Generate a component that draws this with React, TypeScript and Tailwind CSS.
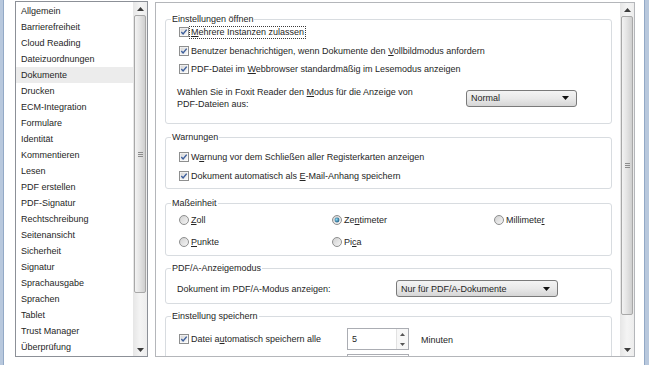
import React from "react";

const items = [
  "Allgemein",
  "Barrierefreiheit",
  "Cloud Reading",
  "Dateizuordnungen",
  "Dokumente",
  "Drucken",
  "ECM-Integration",
  "Formulare",
  "Identität",
  "Kommentieren",
  "Lesen",
  "PDF erstellen",
  "PDF-Signatur",
  "Rechtschreibung",
  "Seitenansicht",
  "Sicherheit",
  "Signatur",
  "Sprachausgabe",
  "Sprachen",
  "Tablet",
  "Trust Manager",
  "Überprüfung",
];

function Arrow({ up }: { up: boolean }) {
  return (
    <svg width="7" height="4" viewBox="0 0 7 4">
      <path d={up ? "M0 4 L3.5 0 L7 4 Z" : "M0 0 L3.5 4 L7 0 Z"} fill="#3c3c3c" />
    </svg>
  );
}

function Grip() {
  return (
    <div className="flex flex-col gap-[1px]">
      <div className="w-[5px] h-[1px] bg-[#8c8c8c]" />
      <div className="w-[5px] h-[1px] bg-[#8c8c8c]" />
      <div className="w-[5px] h-[1px] bg-[#8c8c8c]" />
    </div>
  );
}

function Scrollbar({ thumbClass }: { thumbClass: string }) {
  return (
    <div className="w-[14px] h-full shrink-0 flex flex-col bg-linear-to-r from-[#e6e6e6] via-[#f4f4f4] to-[#ededed]">
      <div className="h-[13px] shrink-0 flex items-center justify-center">
        <Arrow up />
      </div>
      <div
        className={
          thumbClass +
          " shrink-0 mx-[1px] rounded-[2px] border border-[#a8a8a8] bg-linear-to-r from-[#f3f3f3] via-[#e3e3e3] to-[#cfcfcf] flex items-center justify-center"
        }
      >
        <Grip />
      </div>
      <div className="flex-1" />
      <div className="h-[13px] shrink-0 flex items-center justify-center">
        <Arrow up={false} />
      </div>
    </div>
  );
}

function CheckIcon() {
  return (
    <svg width="10" height="10" viewBox="0 0 10 10" className="shrink-0">
      <defs>
        <linearGradient id="cbg" x1="0" y1="0" x2="1" y2="1">
          <stop offset="0" stopColor="#d6d6d6" />
          <stop offset="1" stopColor="#fafafa" />
        </linearGradient>
      </defs>
      <rect x="0.5" y="0.5" width="9" height="9" fill="#ffffff" stroke="#8e8f8f" />
      <rect x="1.5" y="1.5" width="7" height="7" fill="url(#cbg)" />
      <path d="M2.3 5.1 L4.1 7 L7.7 2.6" fill="none" stroke="#3d5f9c" strokeWidth="1.4" />
    </svg>
  );
}

function RadioIcon({ on }: { on?: boolean }) {
  return (
    <svg width="10" height="10" viewBox="0 0 10 10" className="shrink-0">
      <defs>
        <linearGradient id="rbg" x1="0" y1="0" x2="1" y2="1">
          <stop offset="0" stopColor="#cfcfcf" />
          <stop offset="1" stopColor="#f7f7f7" />
        </linearGradient>
        <radialGradient id="rdot" cx="0.4" cy="0.4" r="0.6">
          <stop offset="0" stopColor="#8fdcf5" />
          <stop offset="1" stopColor="#1d5d85" />
        </radialGradient>
      </defs>
      <circle cx="5" cy="5" r="4.5" fill="url(#rbg)" stroke="#8e8f8f" />
      {on && <circle cx="5" cy="5" r="2.4" fill="url(#rdot)" />}
    </svg>
  );
}

function U({ children }: { children: React.ReactNode }) {
  return <span className="underline decoration-1 underline-offset-[1px]">{children}</span>;
}

function Cb({ children, focus }: { children?: React.ReactNode; focus?: boolean }) {
  return (
    <div className="h-[14px] flex items-center whitespace-nowrap">
      <CheckIcon />
      {focus ? (
        <span className="border border-dotted border-[#3a3a3a] px-[1px] leading-[11px]">{children}</span>
      ) : (
        <span className="ml-[2px]">{children}</span>
      )}
    </div>
  );
}

function Radio({ children, on }: { children: React.ReactNode; on?: boolean }) {
  return (
    <div className="h-[14px] flex items-center whitespace-nowrap">
      <RadioIcon on={on} />
      <span className="ml-[2px]">{children}</span>
    </div>
  );
}

function Combo({ children, className }: { children: React.ReactNode; className: string }) {
  return (
    <div
      className={
        className +
        " h-[17px] shrink-0 rounded-[3px] border border-[#7a7a7a] bg-linear-to-b from-[#f4f4f4] via-[#e9e9e9] to-[#d6d6d6] flex items-center justify-between pl-[4px] pr-[7px]"
      }
    >
      <span className="whitespace-nowrap">{children}</span>
      <svg width="7" height="4" viewBox="0 0 7 4">
        <path d="M0 0 L3.5 4 L7 0 Z" fill="#111" />
      </svg>
    </div>
  );
}

function Group({
  title,
  className,
  children,
}: {
  title: string;
  className: string;
  children: React.ReactNode;
}) {
  return (
    <fieldset className={className + " border border-[#d8dce0] rounded-[3px] pl-[5px] pr-[6px] shrink-0"}>
      <legend className="px-[1px] leading-[12px] whitespace-nowrap">{title}</legend>
      <div className="pl-[8px]">{children}</div>
    </fieldset>
  );
}

export default function App() {
  return (
    <div className="w-[649px] h-[365px] bg-white flex overflow-hidden font-['Liberation_Sans',Arial,sans-serif] text-[9px] leading-[12px] text-[#262626]">
      <div className="w-[4px] h-full shrink-0 bg-[#b8c8dd] border-r border-[#93a9c6]" />

      {/* list box */}
      <div className="ml-[11px] mt-[1px] w-[133px] h-[356px] shrink-0 border border-[#8c9097] bg-white flex">
        <div className="flex-1 pt-[1px] flex flex-col">
          {items.map((it) => (
            <div
              key={it}
              className={
                "h-[16px] shrink-0 flex items-center pl-[5px] whitespace-nowrap " +
                (it === "Dokumente" ? "bg-[#ececec]" : "")
              }
            >
              {it}
            </div>
          ))}
        </div>
        <Scrollbar thumbClass="h-[278px]" />
      </div>

      {/* settings panel */}
      <div className="ml-[7px] mt-[2px] w-[480px] h-[355px] shrink-0 border border-[#b4b6ba] bg-white flex">
        <div className="flex-1 overflow-hidden pl-[9px] pr-[8px] pt-[10px] flex flex-col">
          <Group title="Einstellungen öffnen" className="pb-[13px]">
            <div className="flex flex-col gap-[4.5px]">
              <Cb focus>
                <U>M</U>ehrere Instanzen zulassen
              </Cb>
              <Cb>
                Benutzer benachrichtigen, wenn Dokumente den <U>V</U>ollbildmodus anfordern
              </Cb>
              <Cb>
                PDF-Datei im <U>W</U>ebbrowser standardmäßig im Lesemodus anzeigen
              </Cb>
            </div>
            <div className="mt-[10px] -ml-[2px] flex items-center">
              <div className="w-[289px] shrink-0 whitespace-nowrap">
                Wählen Sie in Foxit Reader den <U>M</U>odus für die Anzeige von
                <br />
                PDF-Dateien aus:
              </div>
              <Combo className="w-[111px]">Normal</Combo>
            </div>
          </Group>

          <Group title="Warnungen" className="mt-[7px] pt-[7px] pb-[5px]">
            <div className="flex flex-col gap-[5px]">
              <Cb>
                W<U>a</U>rnung vor dem Schließen aller Registerkarten anzeigen
              </Cb>
              <Cb>
                Dokument automatisch als <U>E</U>-Mail-Anhang speichern
              </Cb>
            </div>
          </Group>

          <Group title="Maßeinheit" className="mt-[8px] pt-[4px] pb-[6px]">
            <div className="grid grid-cols-[153px_162px_1fr] gap-y-[8px]">
              <Radio>
                <U>Z</U>oll
              </Radio>
              <Radio on>
                Ze<U>n</U>timeter
              </Radio>
              <Radio>
                Millimete<U>r</U>
              </Radio>
              <Radio>
                <U>P</U>unkte
              </Radio>
              <Radio>
                Pi<U>c</U>a
              </Radio>
            </div>
          </Group>

          <Group title="PDF/A-Anzeigemodus" className="mt-[6px] pt-[6px] pb-[6px]">
            <div className="-ml-[2px] flex items-center">
              <div className="w-[219px] shrink-0 whitespace-nowrap">Dokument im PDF/A-Modus anzeigen:</div>
              <Combo className="w-[162px]">Nur für PDF/A-Dokumente</Combo>
            </div>
          </Group>

          <Group title="Einstellung speichern" className="mt-[6px] pt-[6px] pb-[6px]">
            <div className="flex flex-col gap-[4px]">
              <div className="h-[22px] flex items-center">
                <div className="w-[168px] shrink-0">
                  <Cb>
                    Datei a<U>u</U>tomatisch speichern alle
                  </Cb>
                </div>
                <div className="w-[62px] h-[22px] shrink-0 border border-[#abadb3] bg-white flex">
                  <div className="flex-1 flex items-center pl-[4px]">5</div>
                  <div className="w-[12px] flex flex-col border-l border-[#e2e2e2] bg-[#f7f7f7]">
                    <div className="flex-1 flex items-center justify-center">
                      <svg width="5" height="3" viewBox="0 0 5 3">
                        <path d="M0 3 L2.5 0 L5 3 Z" fill="#555" />
                      </svg>
                    </div>
                    <div className="flex-1 flex items-center justify-center">
                      <svg width="5" height="3" viewBox="0 0 5 3">
                        <path d="M0 0 L2.5 3 L5 0 Z" fill="#555" />
                      </svg>
                    </div>
                  </div>
                </div>
                <span className="ml-[12px] mt-[2px]">Minuten</span>
              </div>
              <div className="h-[22px] flex items-center">
                <div className="w-[168px] shrink-0">
                  <Cb />
                </div>
                <div className="w-[62px] h-[22px] shrink-0 border border-[#abadb3] bg-white" />
              </div>
            </div>
          </Group>
        </div>
        <Scrollbar thumbClass="h-[299px]" />
      </div>

      <div className="ml-auto w-[5px] h-full shrink-0 bg-[#b8c8dd] border-l border-[#93a9c6]" />
    </div>
  );
}
